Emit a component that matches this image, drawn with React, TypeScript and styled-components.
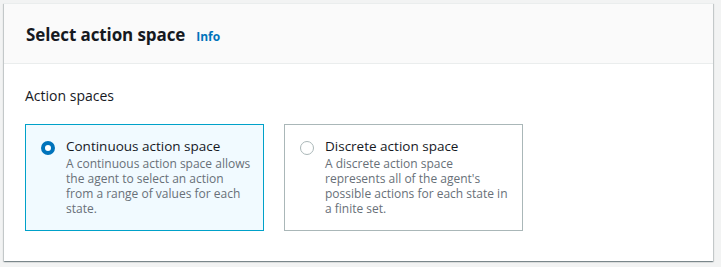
import styled, { createGlobalStyle } from 'styled-components';

const GlobalStyle = createGlobalStyle`
    body {
        margin: 0;
        background: #f2f3f3;
        font-family: "Open Sans", "Noto Sans", Arial, sans-serif;
        color: #16191f;
    }
`

type Option = {
    id: string;
    title: string;
    description: string;
};

const options: Option[] = [
    {
        id: 'continuous',
        title: 'Continuous action space',
        description: 'A continuous action space allows the agent to select an action from a range of values for each state.',
    },
    {
        id: 'discrete',
        title: 'Discrete action space',
        description: "A discrete action space represents all of the agent's possible actions for each state in a finite set.",
    },
];

const Radio = ({ checked }: { checked: boolean }) => (
    <RadioIcon viewBox="0 0 14 14">
        {checked ? (
            <circle cx="7" cy="7" r="5" fill="#ffffff" stroke="#0073bb" strokeWidth="4" />
        ) : (
            <circle cx="7" cy="7" r="6.5" fill="#ffffff" stroke="#aab7b8" strokeWidth="1" />
        )}
    </RadioIcon>
);

export default function App() {
    const selected = 'continuous';
    return (
        <Page>
            <GlobalStyle />
            <Card>
                <Header>
                    <Title>Select action space</Title>
                    <InfoLink href="#">Info</InfoLink>
                </Header>
                <Body>
                    <FieldLabel>Action spaces</FieldLabel>
                    <Tiles>
                        {options.map((o) => (
                            <Tile key={o.id} active={o.id === selected}>
                                <Radio checked={o.id === selected} />
                                <TileText>
                                    <TileTitle>{o.title}</TileTitle>
                                    <TileDesc>{o.description}</TileDesc>
                                </TileText>
                            </Tile>
                        ))}
                    </Tiles>
                </Body>
            </Card>
        </Page>
    );
}

const Page = styled.div`
    padding: 3px 8px 6px 4px;
`

const Card = styled.div`
    background: #ffffff;
    box-shadow: 0 1px 1px 0 rgba(0, 28, 36, 0.3), 1px 1px 1px 0 rgba(0, 28, 36, 0.15), -1px 1px 1px 0 rgba(0, 28, 36, 0.15);
    border-top: 1px solid #eaeded;
`

const Header = styled.div`
    display: flex;
    align-items: baseline;
    gap: 11px;
    height: 60px;
    box-sizing: border-box;
    padding: 19px 22px 0;
    background: #fafafa;
    border-bottom: 1px solid #eaeded;
`

const Title = styled.h2`
    margin: 0;
    font-size: 17px;
    line-height: 24px;
    font-weight: 700;
    letter-spacing: -0.1px;
    color: #16191f;
`

const InfoLink = styled.a`
    font-size: 12px;
    font-weight: 700;
    color: #0073bb;
    text-decoration: none;
`

const Body = styled.div`
    padding: 21px 22px 30px 21px;
`

const FieldLabel = styled.div`
    font-size: 14px;
    line-height: 22px;
    margin-bottom: 17px;
`

const Tiles = styled.div`
    display: flex;
    gap: 20px;
`

const Tile = styled.div<{ active: boolean }>`
    display: flex;
    gap: 11px;
    width: 239px;
    box-sizing: border-box;
    padding: 12px 12px 14px 15px;
    border: 1px solid ${(p) => (p.active ? '#00a1c9' : '#aab7b8')};
    background: ${(p) => (p.active ? '#f1faff' : '#ffffff')};
`

const RadioIcon = styled.svg`
    flex: none;
    width: 14px;
    height: 14px;
    margin-top: 4px;
`

const TileText = styled.div`
    display: flex;
    flex-direction: column;
`

const TileTitle = styled.div`
    font-size: 13.5px;
    line-height: 19px;
    color: #16191f;
`

const TileDesc = styled.div`
    font-size: 12px;
    line-height: 15px;
    color: #687078;
`
